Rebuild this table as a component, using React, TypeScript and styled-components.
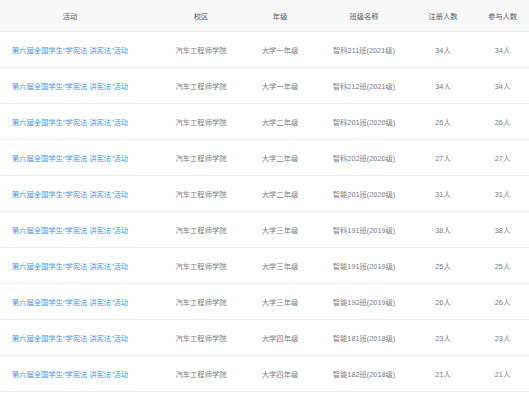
import styled, { createGlobalStyle } from "styled-components";

const GlobalStyle = createGlobalStyle`
    html, body {
        margin: 0;
        padding: 0;
        background: #ffffff;
    }
    body {
        font-family: "Liberation Sans", "Noto Sans CJK SC", sans-serif;
    }
`;

type Row = {
    school: string;
    grade: string;
    klass: string;
    registered: number;
    joined: number;
};

const ACTIVITY = "第六届全国学生“学宪法 讲宪法”活动";

const rows: Row[] = [
    { school: "汽车工程师学院", grade: "大学一年级", klass: "智科211班(2021级)", registered: 34, joined: 34 },
    { school: "汽车工程师学院", grade: "大学一年级", klass: "智科212班(2021级)", registered: 34, joined: 34 },
    { school: "汽车工程师学院", grade: "大学二年级", klass: "智科201班(2020级)", registered: 26, joined: 26 },
    { school: "汽车工程师学院", grade: "大学二年级", klass: "智科202班(2020级)", registered: 27, joined: 27 },
    { school: "汽车工程师学院", grade: "大学二年级", klass: "智能201班(2020级)", registered: 31, joined: 31 },
    { school: "汽车工程师学院", grade: "大学三年级", klass: "智科191班(2019级)", registered: 38, joined: 38 },
    { school: "汽车工程师学院", grade: "大学三年级", klass: "智能191班(2019级)", registered: 25, joined: 25 },
    { school: "汽车工程师学院", grade: "大学三年级", klass: "智能192班(2019级)", registered: 26, joined: 26 },
    { school: "汽车工程师学院", grade: "大学四年级", klass: "智能181班(2018级)", registered: 23, joined: 23 },
    { school: "汽车工程师学院", grade: "大学四年级", klass: "智能182班(2018级)", registered: 21, joined: 21 },
];

// first column is wider on its right side, the table is scrolled a little
const Table = styled.div`
    width: 529px;
    overflow: hidden;
    font-size: 7.3px;
`;

const TableRow = styled.div<{ $header?: boolean }>`
    display: grid;
    grid-template-columns: 160px 82px 76px 92px 66px 1fr;
    align-items: center;
    height: ${({ $header }) => ($header ? "31px" : "35px")};
    background: ${({ $header }) => ($header ? "#f8f8f9" : "#ffffff")};
    border-bottom: 1px solid #ebeef5;
    color: ${({ $header }) => ($header ? "#515a6e" : "#7a7c80")};
`;

const Cell = styled.div<{ $first?: boolean }>`
    text-align: center;
    white-space: nowrap;
    padding-right: ${({ $first }) => ($first ? "20px" : "0")};
`;

const Link = styled.a`
    color: #3d97f5;
    text-decoration: none;
    cursor: pointer;
`;

const headers = ["活动", "校区", "年级", "班级名称", "注册人数", "参与人数"];

export default function App() {
    return (
        <>
            <GlobalStyle />
            <Table>
                <TableRow $header>
                    {headers.map((h, i) => (
                        <Cell key={h} $first={i === 0}>{h}</Cell>
                    ))}
                </TableRow>
                {rows.map((r, i) => (
                    <TableRow key={i}>
                        <Cell $first>
                            <Link>{ACTIVITY}</Link>
                        </Cell>
                        <Cell>{r.school}</Cell>
                        <Cell>{r.grade}</Cell>
                        <Cell>{r.klass}</Cell>
                        <Cell>{r.registered}人</Cell>
                        <Cell>{r.joined}人</Cell>
                    </TableRow>
                ))}
            </Table>
        </>
    );
}
